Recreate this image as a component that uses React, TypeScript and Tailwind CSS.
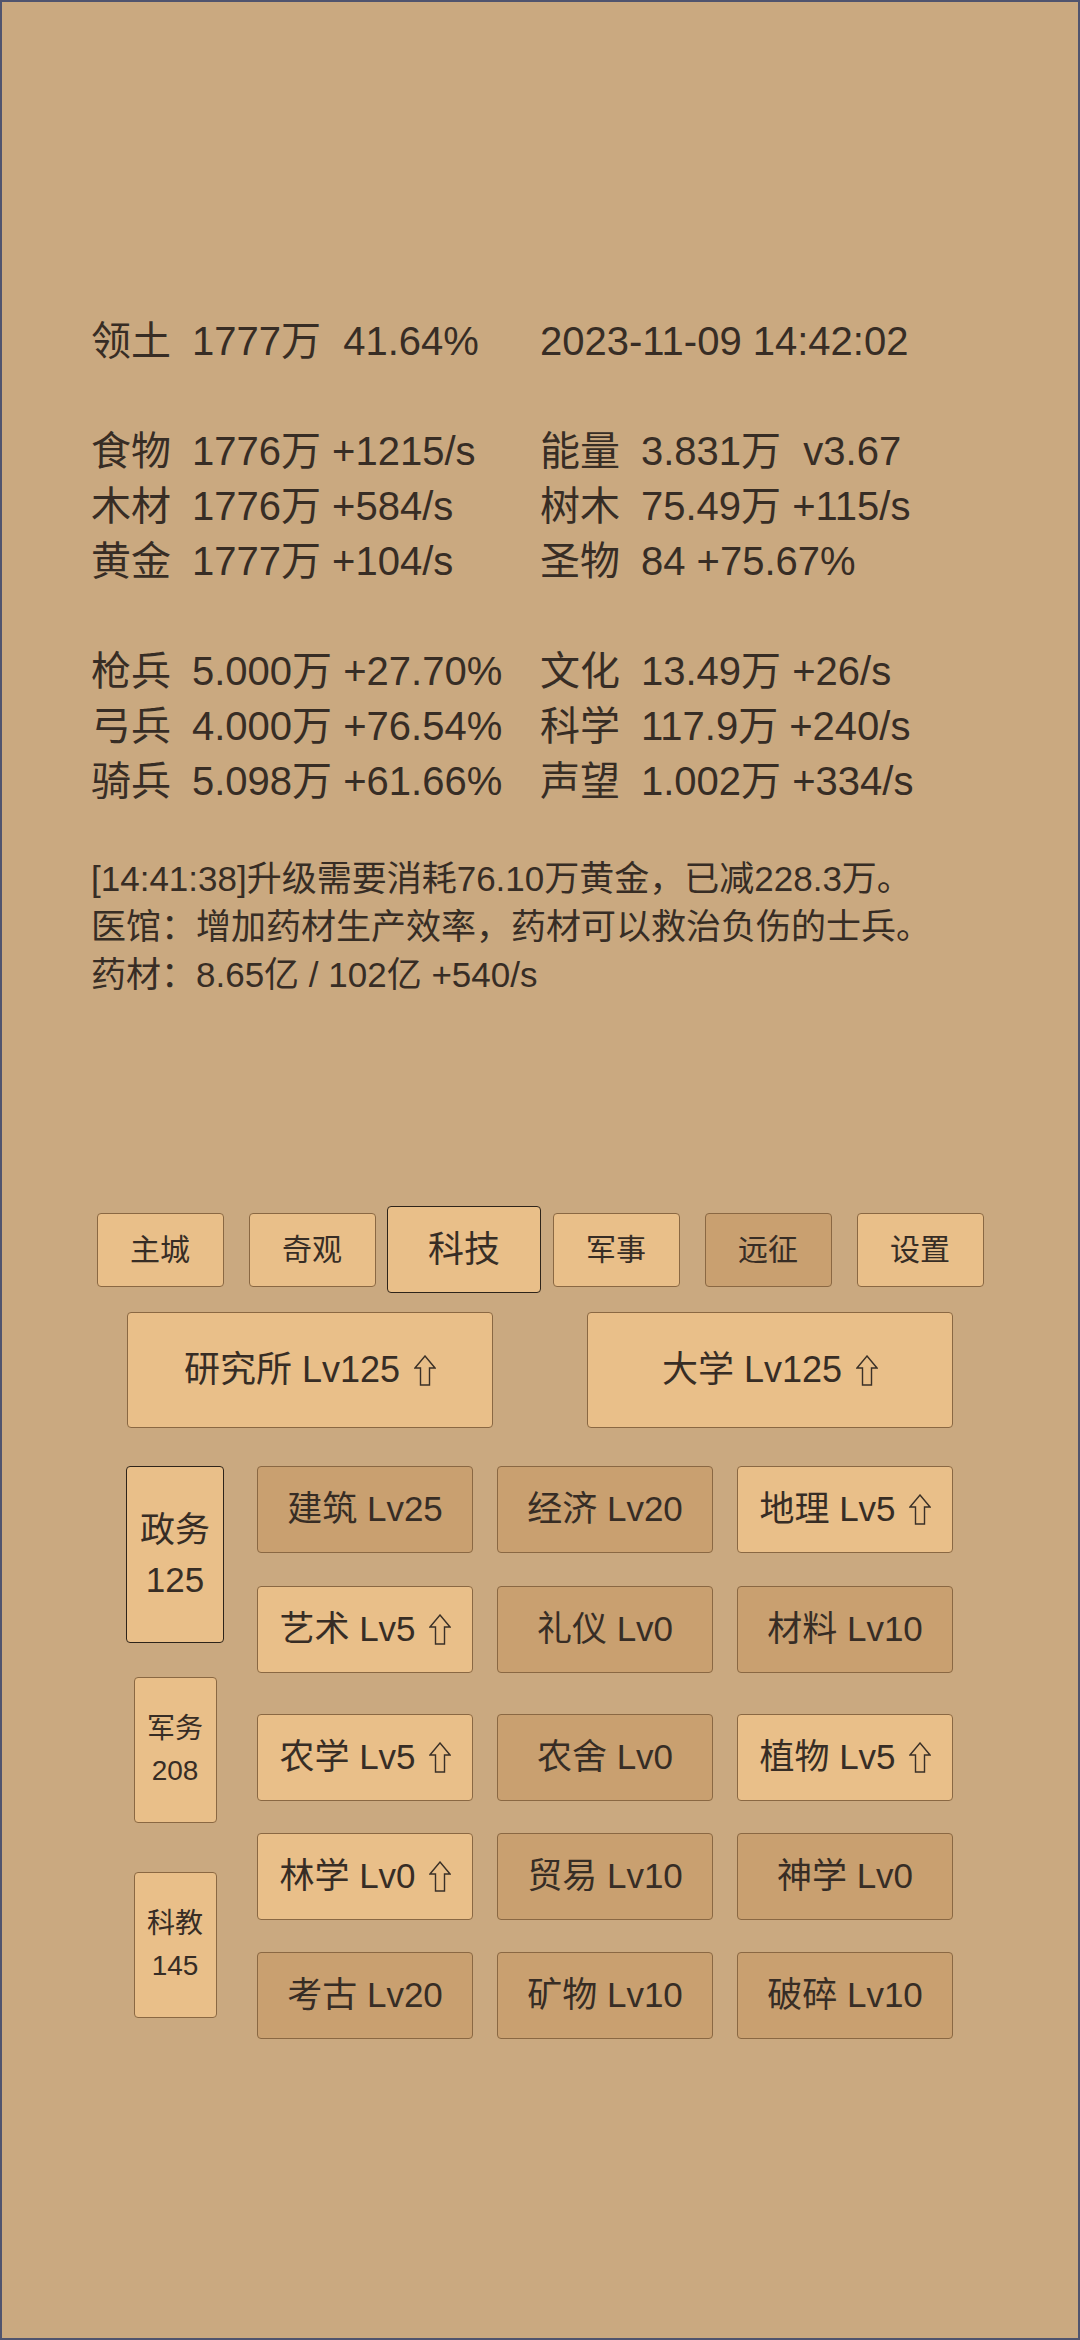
import React from "react";

const stats: (string[] | null)[] = [
  ["领土", "1777万  41.64%", "2023-11-09 14:42:02"],
  null,
  ["食物", "1776万 +1215/s", "能量", "3.831万  v3.67"],
  ["木材", "1776万 +584/s", "树木", "75.49万 +115/s"],
  ["黄金", "1777万 +104/s", "圣物", "84 +75.67%"],
  null,
  ["枪兵", "5.000万 +27.70%", "文化", "13.49万 +26/s"],
  ["弓兵", "4.000万 +76.54%", "科学", "117.9万 +240/s"],
  ["骑兵", "5.098万 +61.66%", "声望", "1.002万 +334/s"],
];

const tabs = ["主城", "奇观", "科技", "军事", "远征", "设置"];

type Tech = { name: string; lv: number; up?: boolean };

const groupA: Tech[] = [
  { name: "建筑", lv: 25 },
  { name: "经济", lv: 20 },
  { name: "地理", lv: 5, up: true },
  { name: "艺术", lv: 5, up: true },
  { name: "礼仪", lv: 0 },
  { name: "材料", lv: 10 },
];

const groupB: Tech[] = [
  { name: "农学", lv: 5, up: true },
  { name: "农舍", lv: 0 },
  { name: "植物", lv: 5, up: true },
  { name: "林学", lv: 0, up: true },
  { name: "贸易", lv: 10 },
  { name: "神学", lv: 0 },
  { name: "考古", lv: 20 },
  { name: "矿物", lv: 10 },
  { name: "破碎", lv: 10 },
];

function UpArrow() {
  return (
    <svg width="22" height="31" viewBox="0 0 22 31" className="inline-block shrink-0">
      <path
        d="M11 1 L21 13 L15.5 13 L15.5 30 L6.5 30 L6.5 13 L1 13 Z"
        fill="none"
        stroke="#3a3027"
        strokeWidth="1.4"
        strokeLinejoin="miter"
      />
    </svg>
  );
}

function TechButton({ t }: { t: Tech }) {
  return (
    <div
      className={`flex h-[87px] items-center justify-center gap-[13px] rounded-[4px] border border-[#8a6843] text-[35px] ${
        t.up ? "bg-[#e9bf89]" : "bg-[#c9a070]"
      }`}
    >
      <span className="whitespace-pre">{`${t.name} Lv${t.lv}`}</span>
      {t.up && <UpArrow />}
    </div>
  );
}

export default function App() {
  return (
    <div className="h-[2340px] w-[1080px] border-2 border-[#50546e] bg-[#caa980] font-['Liberation_Sans','Noto_Sans_CJK_SC',sans-serif] text-[#372d25]">
      {/* stats */}
      <div className="ml-[89px] mt-[312px] grid grid-cols-[101px_348px_101px_1fr] text-[40px] leading-[55px]">
        {stats.map((row, i) =>
          row === null ? (
            <div key={i} className="col-span-4 h-[55px]" />
          ) : row.length === 3 ? (
            <React.Fragment key={i}>
              <span>{row[0]}</span>
              <span className="whitespace-pre">{row[1]}</span>
              <span className="col-span-2 whitespace-pre">{row[2]}</span>
            </React.Fragment>
          ) : (
            <React.Fragment key={i}>
              <span>{row[0]}</span>
              <span className="whitespace-pre">{row[1]}</span>
              <span>{row[2]}</span>
              <span className="whitespace-pre">{row[3]}</span>
            </React.Fragment>
          )
        )}
      </div>

      {/* messages */}
      <div className="ml-[89px] mt-[46px] text-[35px] leading-[48px]">
        <p>[14:41:38]升级需要消耗76.10万黄金，已减228.3万。</p>
        <p>医馆：增加药材生产效率，药材可以救治负伤的士兵。</p>
        <p className="whitespace-pre">药材：8.65亿 / 102亿 +540/s</p>
      </div>

      {/* tabs */}
      <div className="mt-[207px] flex h-[87px] items-center justify-center">
        {tabs.map((name) => {
          const active = name === "科技";
          return (
            <div key={name} className="flex w-[152px] justify-center">
              <div
                className={`flex items-center justify-center rounded-[4px] border ${
                  active
                    ? "h-[87px] w-[154px] shrink-0 border-[#2e241a] bg-[#e9bf89] text-[36px]"
                    : name === "远征"
                      ? "h-[74px] w-[127px] border-[#8a6843] bg-[#c9a070] text-[30px]"
                      : "h-[74px] w-[127px] border-[#8a6843] bg-[#e9bf89] text-[30px]"
                }`}
              >
                {name}
              </div>
            </div>
          );
        })}
      </div>

      {/* main buildings */}
      <div className="mt-[19px] flex justify-center gap-[94px]">
        {["研究所 Lv125", "大学 Lv125"].map((b) => (
          <div
            key={b}
            className="flex h-[116px] w-[366px] items-center justify-center gap-[14px] rounded-[4px] border border-[#8a6843] bg-[#e9bf89] text-[36px]"
          >
            <span className="whitespace-pre">{b}</span>
            <UpArrow />
          </div>
        ))}
      </div>

      {/* tech tree */}
      <div className="ml-[108px] mt-[38px] flex">
        <div className="flex w-[130px] flex-col items-center">
          <div className="flex h-[177px] w-[98px] flex-col items-center justify-center rounded-[4px] border border-[#2e241a] bg-[#e9bf89] text-[35px] leading-[50px]">
            <span>政务</span>
            <span>125</span>
          </div>
          <div className="mt-[34px] flex h-[146px] w-[83px] flex-col items-center justify-center rounded-[4px] border border-[#8a6843] bg-[#e9bf89] text-[28px] leading-[42px]">
            <span>军务</span>
            <span>208</span>
          </div>
          <div className="mt-[49px] flex h-[146px] w-[83px] flex-col items-center justify-center rounded-[4px] border border-[#8a6843] bg-[#e9bf89] text-[28px] leading-[42px]">
            <span>科教</span>
            <span>145</span>
          </div>
        </div>

        <div className="ml-[17px] flex flex-col">
          <div className="grid grid-cols-[216px_216px_216px] gap-x-[24px] gap-y-[33px]">
            {groupA.map((t) => (
              <TechButton key={t.name} t={t} />
            ))}
          </div>
          <div className="mt-[41px] grid grid-cols-[216px_216px_216px] gap-x-[24px] gap-y-[32px]">
            {groupB.map((t) => (
              <TechButton key={t.name} t={t} />
            ))}
          </div>
        </div>
      </div>
    </div>
  );
}
